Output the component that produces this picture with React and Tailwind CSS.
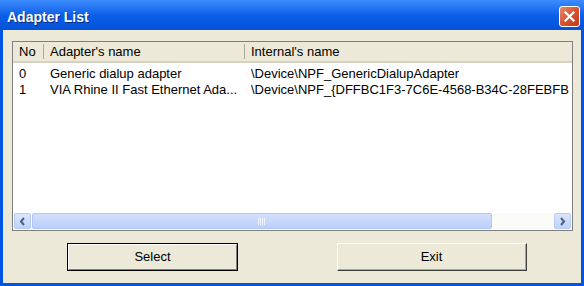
export default function App() {
  const font = { fontFamily: '"Liberation Sans", Arial, sans-serif' };
  return (
    <div className="w-[584px] h-[286px] flex flex-col bg-[#0054e3] overflow-hidden" style={font}>
      {/* Title bar */}
      <div className="h-[30px] shrink-0 flex items-center justify-between pl-[7px] pr-[4px] bg-gradient-to-b from-[#3a89fb] via-[#0a5ee8] to-[#0452d8] border-t border-[#3d8cff]">
        <span className="text-white font-bold text-[14px] pt-[3px] [text-shadow:1px_1px_0_#0b2a80]">Adapter List</span>
        <div className="w-[21px] h-[21px] mt-[1px] rounded-[3px] border border-white bg-gradient-to-br from-[#e88a6c] via-[#d8522c] to-[#c23a17] flex items-center justify-center">
          <svg width="11" height="11" viewBox="0 0 11 11">
            <path d="M1.5 1.5 L9.5 9.5 M9.5 1.5 L1.5 9.5" stroke="white" strokeWidth="2.2" strokeLinecap="square" />
          </svg>
        </div>
      </div>
      {/* Body */}
      <div className="flex-1 mx-[3px] mb-[3px] bg-[#ece9d8] flex flex-col pt-[11px] pl-[9px] pr-[8px]">
        {/* List view */}
        <div className="h-[190px] border border-[#7f7f7f] bg-white flex flex-col text-[13px] text-black">
          {/* Header */}
          <div className="h-[21px] flex bg-[#ece9d8] border-b-2 border-[#d6d2c2] shrink-0 pt-[2px]">
            <div className="w-[31px] pl-[6px] flex items-center border-r border-[#aca899] mb-[2px]">No</div>
            <div className="w-[201px] pl-[6px] flex items-center border-r border-[#aca899] mb-[2px]">Adapter's name</div>
            <div className="flex-1 pl-[6px] flex items-center mb-[2px]">Internal's name</div>
          </div>
          {/* Rows */}
          <div className="flex-1 pt-[3px] overflow-hidden">
            {[
              ["0", "Generic dialup adapter", "\\Device\\NPF_GenericDialupAdapter"],
              ["1", "VIA Rhine II Fast Ethernet Ada...", "\\Device\\NPF_{DFFBC1F3-7C6E-4568-B34C-28FEBFB"],
            ].map((r) => (
              <div key={r[0]} className="h-[16px] flex items-center whitespace-nowrap">
                <div className="w-[31px] pl-[6px] shrink-0">{r[0]}</div>
                <div className="w-[201px] pl-[6px] shrink-0">{r[1]}</div>
                <div className="flex-1 pl-[6px]">{r[2]}</div>
              </div>
            ))}
          </div>
          {/* Horizontal scrollbar */}
          <div className="h-[17px] flex items-stretch bg-[#fbfbf8] px-[1px] pb-[1px] shrink-0">
            <div className="w-[17px] rounded-[2px] border border-[#b7cbf5] bg-gradient-to-b from-[#dbe6fd] to-[#c0d2fa] flex items-center justify-center">
              <svg width="7" height="9" viewBox="0 0 7 9"><path d="M5 1 L2 4.5 L5 8" stroke="#4d6185" strokeWidth="2" fill="none" /></svg>
            </div>
            <div className="w-[460px] ml-[1px] rounded-[2px] border border-[#b0c6f4] bg-gradient-to-b from-[#d3e0fd] to-[#bccffa] flex items-center justify-center">
              <svg width="8" height="7" viewBox="0 0 8 7">
                <path d="M0.5 0 V7 M2.5 0 V7 M4.5 0 V7 M6.5 0 V7" stroke="#eef3ff" strokeWidth="1" />
              </svg>
            </div>
            <div className="flex-1" />
            <div className="w-[17px] rounded-[2px] border border-[#b7cbf5] bg-gradient-to-b from-[#dbe6fd] to-[#c0d2fa] flex items-center justify-center">
              <svg width="7" height="9" viewBox="0 0 7 9"><path d="M2 1 L5 4.5 L2 8" stroke="#4d6185" strokeWidth="2" fill="none" /></svg>
            </div>
          </div>
        </div>
        {/* Buttons */}
        <div className="flex pt-[12px]">
          <div className="ml-[55px] w-[171px] h-[28px] border border-black">
            <div className="w-full h-full border-t border-l border-white border-r border-b border-r-[#808080] border-b-[#808080] flex items-center justify-center text-[13px] text-black">Select</div>
          </div>
          <div className="ml-[99px] w-[190px] h-[28px] border-t border-l border-white border-r border-b border-r-[#404040] border-b-[#404040]">
            <div className="w-full h-full border-r border-b border-[#aca899] flex items-center justify-center text-[13px] text-black">Exit</div>
          </div>
        </div>
      </div>
    </div>
  );
}
